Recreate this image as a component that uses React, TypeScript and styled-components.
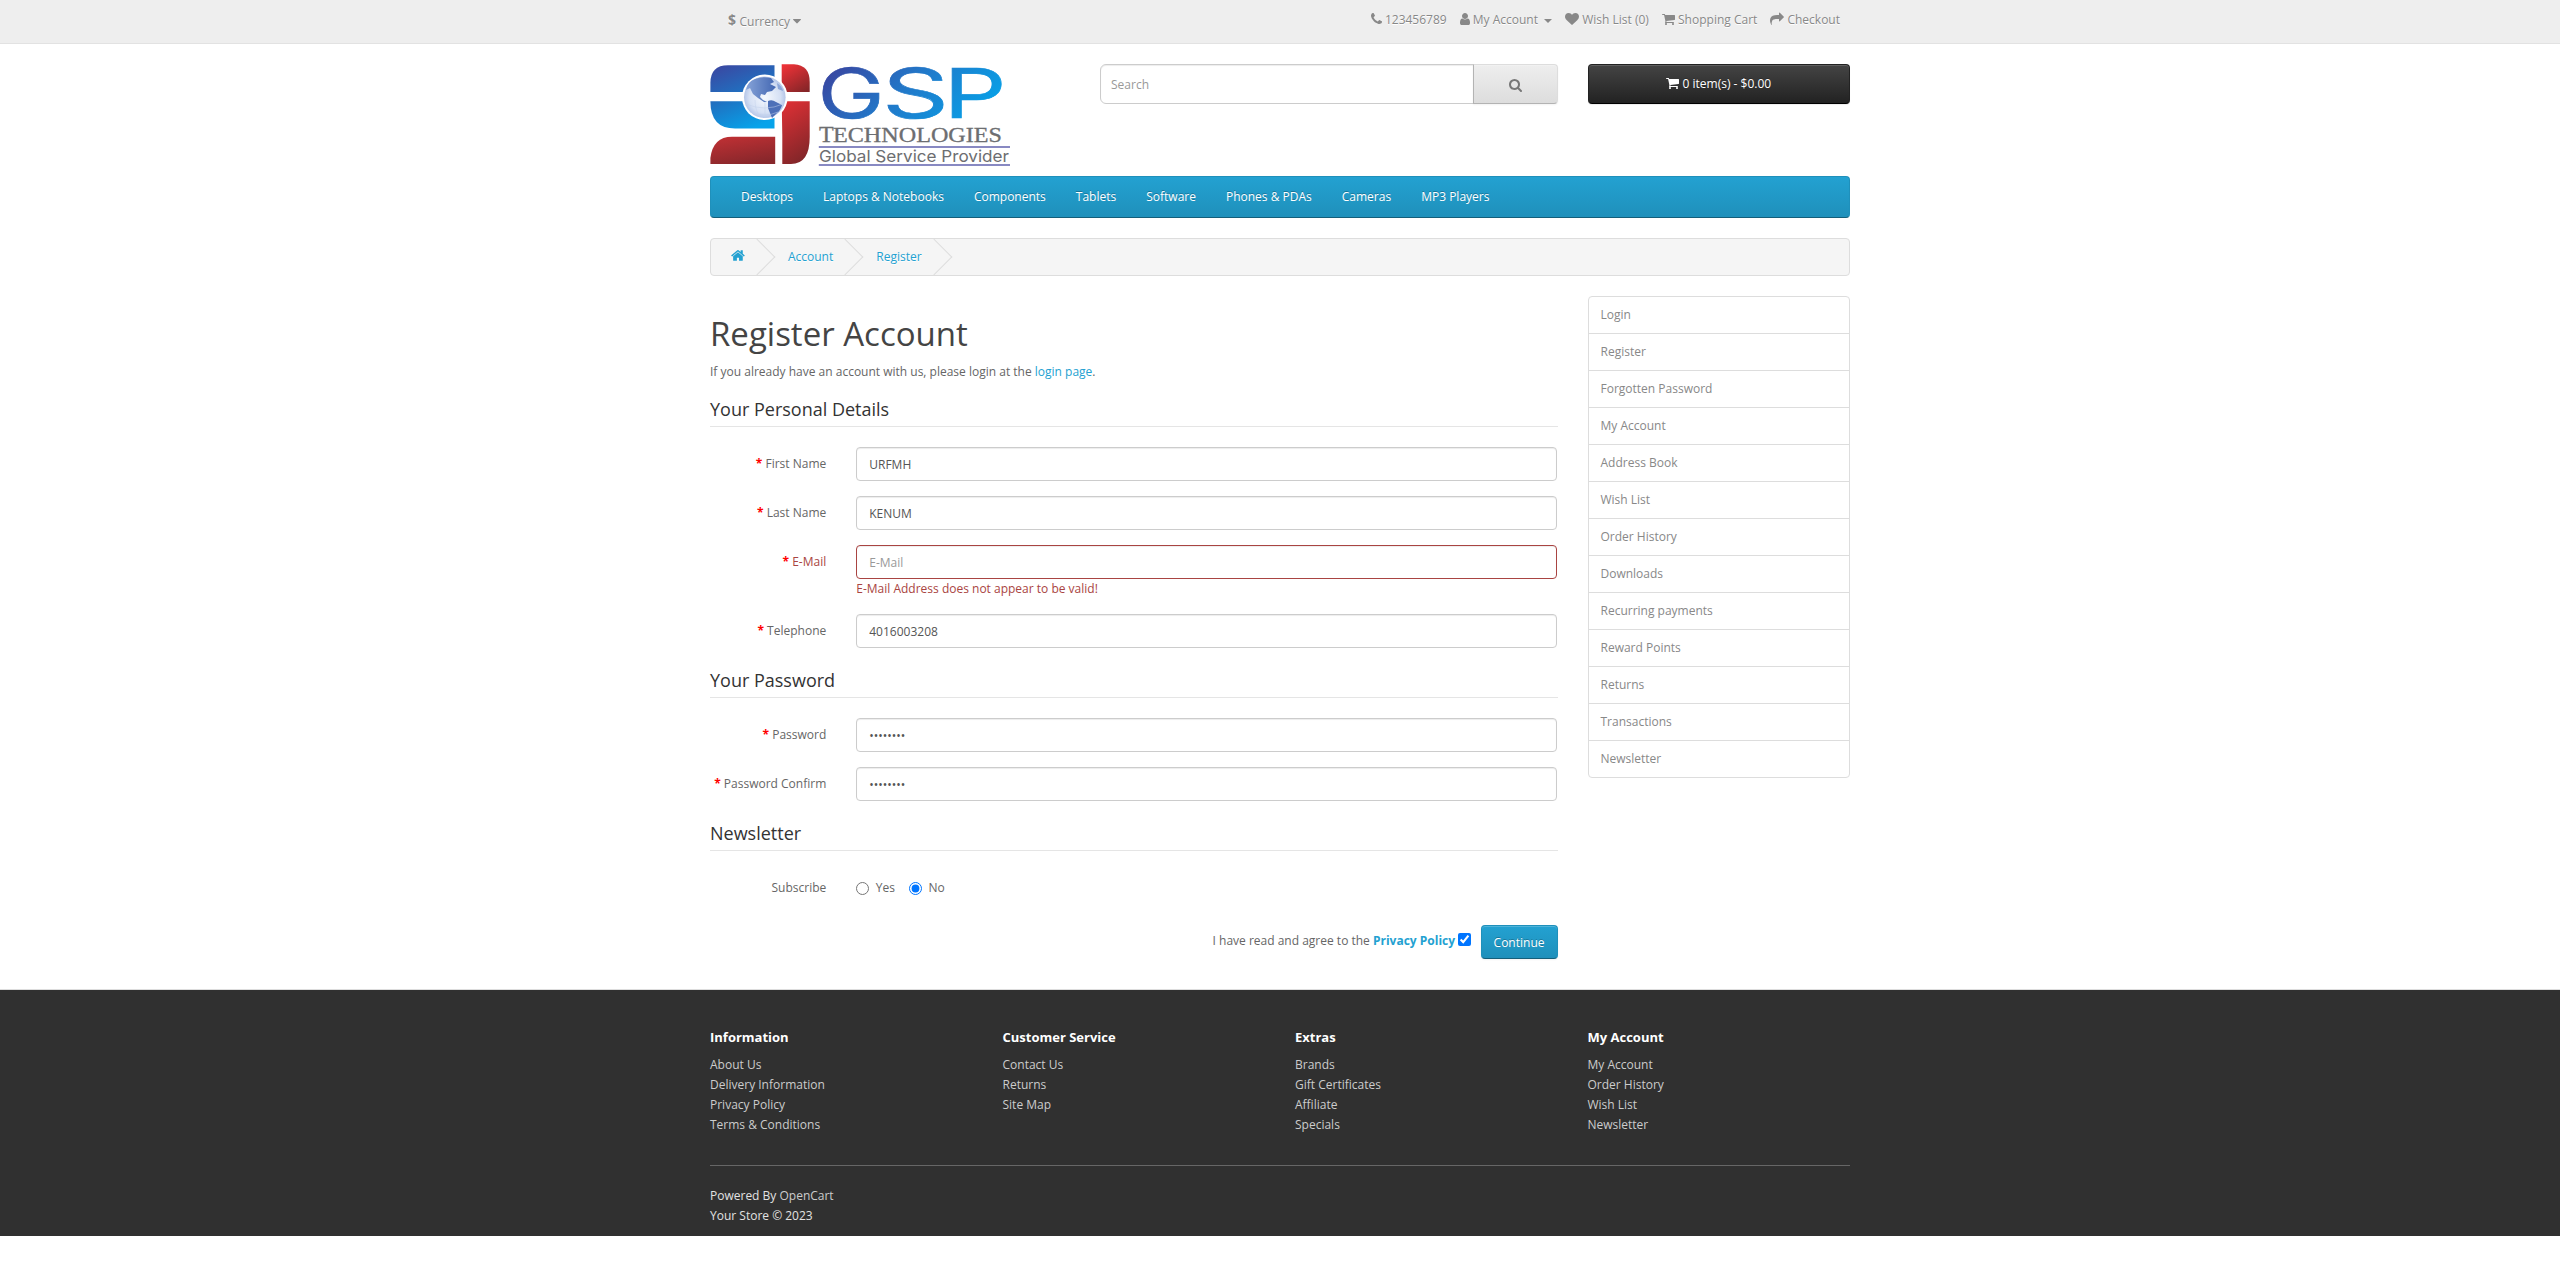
import React from "react";
import styled, { createGlobalStyle, css } from "styled-components";

const Global = createGlobalStyle`
  *, *::before, *::after { box-sizing: border-box; }
  body {
    margin: 0;
    background: #fff;
    color: #666;
    font: 400 12px/20px "Open Sans", sans-serif;
  }
  a { color: #23a1d1; text-decoration: none; }
  ul { list-style: none; margin: 0; padding: 0; }
  p { margin: 0 0 10px; }
  input, button { font-family: inherit; }
`;

const Container = styled.div`
  width: 1170px;
  margin: 0 auto;
  padding: 0 15px;
`;

/* ---------- icons ---------- */

type IconName = "phone" | "user" | "heart" | "cart" | "share" | "search" | "home" | "caret";

const ICONS: Record<IconName, { x: number; w: number; d: string }> = {
  phone: {
    x: 192,
    w: 1408,
    d: "M1600 1240q0 27-10 70.5t-21 68.5q-21 50-122 106-94 51-186 51-27 0-53-3.5t-57.5-12.5-47-14.5-55.5-20.5-49-18q-98-35-175-83-127-79-264-216t-216-264q-48-77-83-175-3-9-18-49t-20.5-55.5-14.5-47-12.5-57.5-3.5-53q0-92 51-186 56-101 106-122 25-11 68.5-21t70.5-10q14 0 21 3 18 6 53 76 11 19 30 54t35 63.5 31 53.5q3 4 17.5 25t21.5 35.5 7 28.5q0 20-28.5 50t-62 55-62 53-28.5 46q0 9 5 22.5t8.5 20.5 14 24 11.5 19q76 137 174 235t235 174q2 1 19 11.5t24 14 20.5 8.5 22.5 5q18 0 46-28.5t53-62 55-62 50-28.5q14 0 28.5 7t35.5 21.5 25 17.5q25 15 53.5 31t63.5 35 54 30q70 35 76 53 3 7 3 21z",
  },
  user: {
    x: 256,
    w: 1280,
    d: "M1536 1399q0 109-62.5 187t-150.5 78h-854q-88 0-150.5-78t-62.5-187q0-85 8.5-160.5t31.5-152 58.5-131 94-89 134.5-34.5q131 128 313 128t313-128q76 0 134.5 34.5t94 89 58.5 131 31.5 152 8.5 160.5zm-256-887q0 159-112.5 271.5t-271.5 112.5-271.5-112.5-112.5-271.5 112.5-271.5 271.5-112.5 271.5 112.5 112.5 271.5z",
  },
  heart: {
    x: 0,
    w: 1792,
    d: "M896 1664q-26 0-44-18l-624-602q-10-8-27.5-26t-55.5-65.5-68-97.5-53.5-121-23.5-138q0-220 127-344t351-124q62 0 126.5 21.5t120 58 95.5 68.5 76 68q36-36 76-68t95.5-68.5 120-58 126.5-21.5q224 0 351 124t127 344q0 221-229 450l-623 600q-18 18-44 18z",
  },
  cart: {
    x: 64,
    w: 1664,
    d: "M704 1536q0 52-38 90t-90 38-90-38-38-90 38-90 90-38 90 38 38 90zm896 0q0 52-38 90t-90 38-90-38-38-90 38-90 90-38 90 38 38 90zm128-1088v512q0 24-16.5 42.5t-40.5 21.5l-1044 122q13 60 13 70 0 16-24 64h920q26 0 45 19t19 45-19 45-45 19h-1024q-26 0-45-19t-19-45q0-11 8-31.5t16-36 21.5-40 15.5-29.5l-177-823h-204q-26 0-45-19t-19-45 19-45 45-19h256q16 0 28.5 6.5t19.5 15.5 13 24.5 8 26 5.5 29.5 4.5 26h1201q26 0 45 19t19 45z",
  },
  share: {
    x: 0,
    w: 1792,
    d: "M1792 640q0 26-19 45l-512 512q-19 19-45 19t-45-19-19-45v-256h-224q-98 0-175.5 6t-154 21.5-133 42.5-105.5 69.5-80 101-48.5 138.5-17.5 181q0 55 5 123 0 6 2.5 23.5t2.5 26.5q0 15-8.5 25t-23.5 10q-16 0-28-17-7-9-13-22t-13.5-30-10.5-24q-127-285-127-451 0-199 53-333 162-403 875-403h224v-256q0-26 19-45t45-19 45 19l512 512q19 19 19 45z",
  },
  search: {
    x: 64,
    w: 1664,
    d: "M1216 832q0-185-131.5-316.5t-316.5-131.5-316.5 131.5-131.5 316.5 131.5 316.5 316.5 131.5 316.5-131.5 131.5-316.5zm512 832q0 52-38 90t-90 38q-54 0-90-38l-343-342q-179 124-399 124-143 0-273.5-55.5t-225-150-150-225-55.5-273.5 55.5-273.5 150-225 225-150 273.5-55.5 273.5 55.5 225 150 150 225 55.5 273.5q0 220-124 399l343 343q37 37 37 90z",
  },
  home: {
    x: 64,
    w: 1664,
    d: "M1472 992v480q0 26-19 45t-45 19h-384v-384h-256v384h-384q-26 0-45-19t-19-45v-480q0-1 .5-3t.5-3l575-474 575 474q1 2 1 6zm223-69l-62 74q-8 9-21 11h-3q-13 0-21-7l-692-577-692 577q-12 8-24 7-13-2-21-11l-62-74q-8-10-7-23.5t11-21.5l719-599q32-26 76-26t76 26l244 204v-195q0-14 9-23t23-9h192q14 0 23 9t9 23v408l219 182q10 8 11 21.5t-7 23.5z",
  },
  caret: {
    x: 384,
    w: 1024,
    d: "M1408 704q0 26-19 45l-448 448q-19 19-45 19t-45-19l-448-448q-19-19-19-45t19-45 45-19h896q26 0 45 19t19 45z",
  },
};

const Glyph = styled.svg<{ $size: number }>`
  height: ${(p) => p.$size}px;
  fill: currentColor;
  vertical-align: -2px;
  overflow: visible;
`;

function Icon({ name, size = 14 }: { name: IconName; size?: number }) {
  const { x, w, d } = ICONS[name];
  return (
    <Glyph $size={size} width={(size * w) / 1792} viewBox={`${x} 0 ${w} 1792`} aria-hidden="true">
      <path d={d} />
    </Glyph>
  );
}

/* ---------- top bar ---------- */

const TopBar = styled.nav`
  height: 44px;
  margin-bottom: 20px;
  padding-top: 4px;
  background: #eee;
  border-bottom: 1px solid #e2e2e2;
  color: #888;
  text-shadow: 0 1px 0 #fff;
`;

const TopInner = styled(Container)`
  display: flex;
  justify-content: space-between;
  padding: 0 20px;
`;

const CurrencyButton = styled.button`
  display: flex;
  height: 34px;
  padding: 0 13px;
  border: 0;
  background: none;
  color: inherit;
  font-size: 12px;
  line-height: 17px;
  text-shadow: inherit;
  strong {
    margin: 8px 3.5px 0 0;
    font-size: 14px;
    line-height: 16px;
  }
  span { margin: 9px 2.5px 0 0; }
  svg { margin-top: 10px; }
`;

const TopLinks = styled.ul`
  display: flex;
  gap: 3px;
  padding-top: 6px;
  li { padding: 0 5px; white-space: nowrap; }
  a { color: inherit; }
`;

const Caret = styled.b`
  display: inline-block;
  margin-left: 3px;
  vertical-align: middle;
  border-top: 4px solid;
  border-right: 4px solid transparent;
  border-left: 4px solid transparent;
`;

/* ---------- header ---------- */

const Header = styled(Container)`
  display: grid;
  grid-template-columns: 360px 457.5px 262.5px;
  column-gap: 30px;
  align-items: start;
  height: 112px;
`;

const SearchBox = styled.div`
  display: flex;
  height: 40px;
`;

const SearchInput = styled.input`
  flex: 1;
  min-width: 0;
  padding: 1px 10px 0;
  border: 1px solid #ccc;
  border-radius: 6px 0 0 6px;
  box-shadow: inset 0 1px 1px rgba(0, 0, 0, 0.075);
  font-size: 12px;
  line-height: 20px;
  &::placeholder { color: #999; }
`;

const SearchButton = styled.button`
  width: 85px;
  margin-left: -1px;
  padding: 1px 0 0;
  border: 1px solid;
  border-color: #ddd #ddd #b3b3b3 #b3b3b3;
  border-radius: 0 4px 4px 0;
  background: linear-gradient(#eee, #ddd);
  box-shadow: inset 0 1px 0 rgba(255, 255, 255, 0.2), 0 1px 2px rgba(0, 0, 0, 0.05);
  color: #777;
`;

const CartButton = styled.button`
  height: 40px;
  padding: 0;
  border: 1px solid;
  border-color: #222 #222 #000;
  border-radius: 4px;
  background: linear-gradient(#444, #222);
  box-shadow: inset 0 1px 0 rgba(255, 255, 255, 0.15), 0 1px 1px rgba(0, 0, 0, 0.075);
  color: #fff;
  font-size: 12px;
  line-height: 18px;
  text-shadow: 0 -1px 0 rgba(0, 0, 0, 0.25);
`;

const LogoArt = styled.svg`
  display: block;
  width: 302px;
  height: 104px;
  overflow: visible;
`;

function Logo() {
  return (
    <LogoArt viewBox="0 0 302 104" role="img" aria-label="GSP Technologies">
      <defs>
        <linearGradient id="blueMark" gradientUnits="userSpaceOnUse" x1="12" y1="0" x2="38" y2="66">
          <stop offset="0" stopColor="#3a48a2" />
          <stop offset="0.5" stopColor="#1f72c2" />
          <stop offset="1" stopColor="#06a3ea" />
        </linearGradient>
        <linearGradient id="redTop" x1="0.2" y1="0" x2="0.8" y2="1">
          <stop offset="0" stopColor="#ec3237" />
          <stop offset="1" stopColor="#862528" />
        </linearGradient>
        <linearGradient id="redSide" x1="0.2" y1="0" x2="0.5" y2="1">
          <stop offset="0" stopColor="#dd3035" />
          <stop offset="1" stopColor="#832629" />
        </linearGradient>
        <linearGradient id="redBase" x1="0.2" y1="0" x2="0.6" y2="1">
          <stop offset="0" stopColor="#bf3034" />
          <stop offset="1" stopColor="#87272b" />
        </linearGradient>
        <linearGradient id="word" gradientUnits="userSpaceOnUse" x1="130" y1="-16" x2="232" y2="88">
          <stop offset="0" stopColor="#3b409c" />
          <stop offset="0.5" stopColor="#2277c8" />
          <stop offset="1" stopColor="#089fe6" />
        </linearGradient>
        <radialGradient id="sea" cx="0.5" cy="0.5" r="0.5">
          <stop offset="0" stopColor="#f6f9fe" />
          <stop offset="0.75" stopColor="#d5e0f4" />
          <stop offset="1" stopColor="#b5c6e8" />
        </radialGradient>
        <linearGradient id="land" x1="0" y1="0" x2="1" y2="0">
          <stop offset="0" stopColor="#86a3d8" />
          <stop offset="1" stopColor="#4367b2" />
        </linearGradient>
      </defs>
      <path d="M18 1.2H64.5V28H.4V19Q.4 1.2 18 1.2Z" fill="url(#blueMark)" />
      <path d="M.4 37.2H64.5V64.5H25Q.4 64.5 .4 37.2Z" fill="url(#blueMark)" />
      <path d="M71.7 .2H84Q99.7 1 99.7 18V28H71.7Z" fill="url(#redTop)" />
      <path d="M71.7 37.2H99.7V73Q99.7 100 81 100H72.3V72Z" fill="url(#redSide)" />
      <path d="M22 72.7H65.2V100H.4V94Q3 72.7 22 72.7Z" fill="url(#redBase)" />
      <circle cx="54.8" cy="33.3" r="22.8" fill="#fff" />
      <circle cx="54.8" cy="33.3" r="20.8" fill="url(#sea)" />
      <path d="M36 26Q37 18 45 15Q53 12 61 14L64 18L60 20L66 23L62 27L57 28L55 31L51 30L50 33L53 36L57 38L54 38L48 34L43 30L40 24Z" fill="url(#land)" />
      <path d="M58 37Q62 35 66 38L72 41Q71 46 66 50L62 54L60 49L58 44Z" fill="#4d70b8" />
      <path d="M67 19Q72 22 73 27L68 25Z" fill="#8ba6d8" />
      <g fill="none" stroke="#c2d0ea" strokeWidth="0.5">
        <path d="M36 40Q55 48 73 40M40 48Q55 54 68 48M55 38V54M45 36Q45 46 50 53" />
      </g>
      <g fill="url(#word)" stroke="url(#word)" strokeWidth="0.6" fontFamily="Inter, sans-serif" fontSize="69" fontWeight="400">
        <text x="107.5" y="54" textLength="67" lengthAdjust="spacingAndGlyphs">G</text>
        <text x="172" y="54" textLength="67" lengthAdjust="spacingAndGlyphs">S</text>
        <text x="233.5" y="54" textLength="63" lengthAdjust="spacingAndGlyphs">P</text>
      </g>
      <text x="109" y="77.6" fill="#6d6e71" stroke="#6d6e71" strokeWidth="0.3" fontFamily="Liberation Serif, serif" fontSize="24">
        T
      </text>
      <text x="123" y="77.6" fill="#6d6e71" stroke="#6d6e71" strokeWidth="0.3" fontFamily="Liberation Serif, serif" fontSize="20.5" textLength="169" lengthAdjust="spacingAndGlyphs">
        ECHNOLOGIES
      </text>
      <path d="M108.8 83H300M108.8 101H300" stroke="#6163ae" strokeWidth="1.5" />
      <text x="109" y="97.8" fill="#6d6e71" fontFamily="Inter, sans-serif" fontSize="16.5" textLength="190" lengthAdjust="spacingAndGlyphs">
        Global Service Provider
      </text>
    </LogoArt>
  );
}

/* ---------- menu and breadcrumb ---------- */

const Menu = styled.nav`
  height: 42px;
  margin-bottom: 20px;
  padding: 0 15px;
  border: 1px solid;
  border-color: #1f90bb #1f90bb #145e7a;
  border-radius: 4px;
  background: linear-gradient(#23a1d1, #1f90bb);
  ul { display: flex; }
  a {
    display: block;
    padding: 10px 15px;
    color: #fff;
    text-shadow: 0 -1px 0 rgba(0, 0, 0, 0.25);
  }
`;

const Breadcrumb = styled.ul`
  display: flex;
  gap: 3px;
  height: 38px;
  margin-bottom: 20px;
  padding: 8px 0;
  border: 1px solid #ddd;
  border-radius: 4px;
  background: #f5f5f5;
  overflow: hidden;
`;

const Crumb = styled.li`
  position: relative;
  padding: 0 20px;
  text-shadow: 0 1px 0 #fff;
  &::after {
    content: "";
    position: absolute;
    top: -3px;
    right: -5px;
    width: 26px;
    height: 26px;
    border-right: 1px solid #ddd;
    border-bottom: 1px solid #ddd;
    transform: rotate(-45deg);
  }
`;

/* ---------- page body ---------- */

const Columns = styled.div`
  display: grid;
  grid-template-columns: 847.5px 262.5px;
  column-gap: 30px;
  align-items: start;
`;

const Title = styled.h1`
  margin: 20px 0 10px;
  color: #444;
  font-size: 33px;
  font-weight: 400;
  line-height: 1.1;
`;

const Legend = styled.h2`
  margin: 0 0 20px;
  padding: 7px 0;
  border-bottom: 1px solid #e5e5e5;
  color: #333;
  font-size: 18px;
  font-weight: 400;
  line-height: 20px;
`;

const Row = styled.div`
  display: grid;
  grid-template-columns: 116.25px 701px;
  column-gap: 30px;
  align-items: start;
  margin-bottom: 15px;
`;

const Label = styled.label<{ $required?: boolean; $error?: boolean }>`
  padding-top: 7px;
  color: ${(p) => (p.$error ? "#a94442" : "#666")};
  text-align: right;
  white-space: nowrap;
  ${(p) =>
    p.$required &&
    css`
      &::before {
        content: "* ";
        color: #f00;
        font-weight: 700;
      }
    `}
`;

const Input = styled.input<{ $error?: boolean }>`
  display: block;
  width: 100%;
  height: 34px;
  padding: 6px 12px;
  border: 1px solid ${(p) => (p.$error ? "#a94442" : "#ccc")};
  border-radius: 4px;
  background: #fff;
  box-shadow: inset 0 1px 1px rgba(0, 0, 0, 0.075);
  color: #555;
  font-size: 12px;
  line-height: 1.42857;
  &::placeholder { color: #999; }
`;

const ErrorText = styled.div`
  color: #a94442;
`;

const Choices = styled.div`
  display: flex;
  gap: 14px;
  padding-top: 7px;
`;

const Choice = styled.label`
  display: flex;
  align-items: flex-start;
  input {
    width: 13px;
    height: 13px;
    margin: 4px 6.5px 0 0;
  }
`;

const Actions = styled.div`
  display: flex;
  justify-content: flex-end;
  margin: 27px 0 30px;
  input {
    width: 13px;
    height: 13px;
    margin: 8px 10px 0 2.5px;
  }
`;

const AgreeText = styled.span`
  margin-top: 6px;
  a { font-weight: 700; }
`;

const PrimaryButton = styled.button`
  height: 34px;
  padding: 1px 12px 0;
  border: 1px solid;
  border-color: #1f90bb #1f90bb #145e7a;
  border-radius: 4px;
  background: linear-gradient(#23a1d1, #1f90bb);
  box-shadow: inset 0 1px 0 rgba(255, 255, 255, 0.2), 0 1px 2px rgba(0, 0, 0, 0.05);
  color: #fff;
  font-size: 12px;
  line-height: 17px;
  text-shadow: 0 -1px 0 rgba(0, 0, 0, 0.25);
`;

const SideList = styled.nav`
  a {
    display: block;
    margin-bottom: -1px;
    padding: 8px 12px;
    border: 1px solid #ddd;
    color: #888;
    text-shadow: 0 1px 0 #fff;
  }
  a:first-child { border-radius: 4px 4px 0 0; }
  a:last-child { margin-bottom: 0; border-radius: 0 0 4px 4px; }
`;

/* ---------- footer ---------- */

const Footer = styled.footer`
  padding-top: 30px;
  border-top: 1px solid #ddd;
  background: #303030;
  color: #e2e2e2;
  a { color: #ccc; }
  p { margin: 0; padding-bottom: 10px; }
`;

const FooterColumns = styled.div`
  display: grid;
  grid-template-columns: repeat(4, 262.5px);
  column-gap: 30px;
`;

const FooterColumn = styled.div`
  padding-bottom: 10px;
  h5 {
    margin: 10px 0;
    color: #fff;
    font-size: 13px;
    font-weight: 700;
    line-height: 1.1;
  }
`;

const Rule = styled.hr`
  height: 1px;
  margin: 20px 0;
  border: 0;
  background: #666;
`;

const MENU = ["Desktops", "Laptops & Notebooks", "Components", "Tablets", "Software", "Phones & PDAs", "Cameras", "MP3 Players"];

const SIDE = [
  "Login", "Register", "Forgotten Password", "My Account", "Address Book", "Wish List", "Order History",
  "Downloads", "Recurring payments", "Reward Points", "Returns", "Transactions", "Newsletter",
];

const FOOTER = [
  { title: "Information", links: ["About Us", "Delivery Information", "Privacy Policy", "Terms & Conditions"] },
  { title: "Customer Service", links: ["Contact Us", "Returns", "Site Map"] },
  { title: "Extras", links: ["Brands", "Gift Certificates", "Affiliate", "Specials"] },
  { title: "My Account", links: ["My Account", "Order History", "Wish List", "Newsletter"] },
];

type FieldProps = { label: string; value?: string; type?: string; error?: string };

function Field({ label, value = "", type = "text", error }: FieldProps) {
  return (
    <Row>
      <Label $required $error={!!error}>{label}</Label>
      <div>
        <Input type={type} defaultValue={value} placeholder={label} $error={!!error} />
        {error && <ErrorText>{error}</ErrorText>}
      </div>
    </Row>
  );
}

export default function App() {
  return (
    <>
      <Global />
      <TopBar>
        <TopInner>
          <CurrencyButton>
            <strong>$</strong>
            <span>Currency</span>
            <Icon name="caret" />
          </CurrencyButton>
          <TopLinks>
            <li><a href="#"><Icon name="phone" /></a> 123456789</li>
            <li><a href="#"><Icon name="user" /> My Account <Caret /></a></li>
            <li><a href="#"><Icon name="heart" /> Wish List (0)</a></li>
            <li><a href="#"><Icon name="cart" /> Shopping Cart</a></li>
            <li><a href="#"><Icon name="share" /> Checkout</a></li>
          </TopLinks>
        </TopInner>
      </TopBar>

      <Header as="header">
        <Logo />
        <SearchBox>
          <SearchInput placeholder="Search" />
          <SearchButton aria-label="Search"><Icon name="search" /></SearchButton>
        </SearchBox>
        <CartButton><Icon name="cart" /> 0 item(s) - $0.00</CartButton>
      </Header>

      <Container>
        <Menu>
          <ul>
            {MENU.map((m) => <li key={m}><a href="#">{m}</a></li>)}
          </ul>
        </Menu>
        <Breadcrumb>
          <Crumb><a href="#"><Icon name="home" size={15} /></a></Crumb>
          <Crumb><a href="#">Account</a></Crumb>
          <Crumb><a href="#">Register</a></Crumb>
        </Breadcrumb>

        <Columns>
          <main>
            <Title>Register Account</Title>
            <p>If you already have an account with us, please login at the <a href="#">login page</a>.</p>
            <Legend>Your Personal Details</Legend>
            <Field label="First Name" value="URFMH" />
            <Field label="Last Name" value="KENUM" />
            <Field label="E-Mail" error="E-Mail Address does not appear to be valid!" />
            <Field label="Telephone" value="4016003208" />
            <Legend>Your Password</Legend>
            <Field label="Password" type="password" value="password" />
            <Field label="Password Confirm" type="password" value="password" />
            <Legend>Newsletter</Legend>
            <Row>
              <Label>Subscribe</Label>
              <Choices>
                <Choice><input type="radio" name="newsletter" />Yes</Choice>
                <Choice><input type="radio" name="newsletter" defaultChecked />No</Choice>
              </Choices>
            </Row>
            <Actions>
              <AgreeText>I have read and agree to the <a href="#">Privacy Policy</a></AgreeText>
              <input type="checkbox" defaultChecked aria-label="Agree" />
              <PrimaryButton>Continue</PrimaryButton>
            </Actions>
          </main>
          <SideList>
            {SIDE.map((s) => <a href="#" key={s}>{s}</a>)}
          </SideList>
        </Columns>
      </Container>

      <Footer>
        <Container>
          <FooterColumns>
            {FOOTER.map((col) => (
              <FooterColumn key={col.title}>
                <h5>{col.title}</h5>
                <ul>
                  {col.links.map((l) => <li key={l}><a href="#">{l}</a></li>)}
                </ul>
              </FooterColumn>
            ))}
          </FooterColumns>
          <Rule />
          <p>Powered By <a href="#">OpenCart</a><br />Your Store © 2023</p>
        </Container>
      </Footer>
    </>
  );
}
